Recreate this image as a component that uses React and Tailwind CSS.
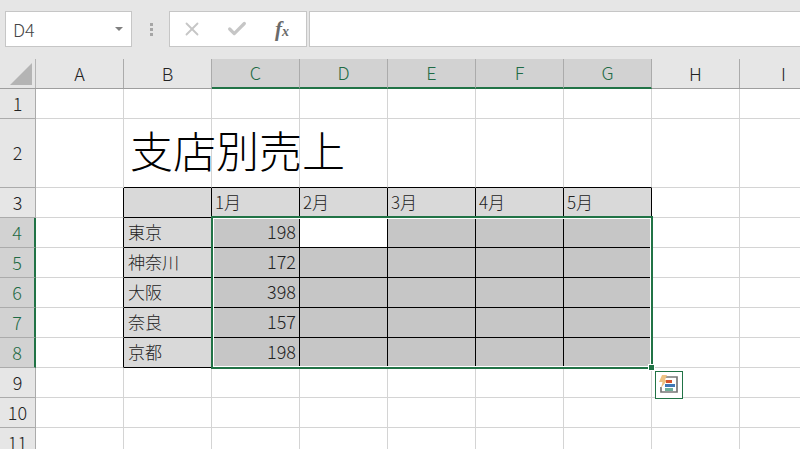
import React from "react";
import { X, Check } from "lucide-react";

const columns = ["A", "B", "C", "D", "E", "F", "G", "H", "I"];
const rowHeights = { 1: "h-[30px]", 2: "h-[69px]" };
const rows = [1, 2, 3, 4, 5, 6, 7, 8, 9, 10, 11];
const months = { C: "1月", D: "2月", E: "3月", F: "4月", G: "5月" };
const branches = { 4: "東京", 5: "神奈川", 6: "大阪", 7: "奈良", 8: "京都" };
const sales = { 4: 198, 5: 172, 6: 398, 7: 157, 8: 198 };

const inTable = (col, row) => "BCDEFG".includes(col) && row >= 3 && row <= 8;
const isSelected = (col, row) => "CDEFG".includes(col) && row >= 4 && row <= 8;

const Cell = ({ col, row }) => {
  // right and bottom edges are what draw the grid, so the table's top/left edges sit on neighbours
  const blackRight = inTable(col, row) || (col === "A" && row >= 3 && row <= 8);
  const blackBottom = inTable(col, row) || ("BCDEFG".includes(col) && row === 2);
  let fill = "bg-white";
  if (inTable(col, row)) fill = "bg-[#d9d9d9]";
  if (isSelected(col, row)) fill = "bg-[#c6c6c6]";
  if (col === "D" && row === 4) fill = "bg-white";

  let text = "";
  if (row === 3 && months[col]) text = months[col];
  if (col === "B" && branches[row]) text = branches[row];

  return (
    <div
      className={`w-[88px] shrink-0 border-r border-b flex items-center pb-[3px] text-[17px] leading-none text-[#222] ${fill} ${
        blackRight ? "border-r-black" : "border-r-[#d4d4d4]"
      } ${blackBottom ? "border-b-black" : "border-b-[#d4d4d4]"}`}
    >
      {text && <span className={col === "B" ? "pl-[4px]" : "pl-[3px]"}>{text}</span>}
      {col === "C" && sales[row] && (
        <span className="ml-auto pr-[3px] text-[18px]">{sales[row]}</span>
      )}
    </div>
  );
};

const QuickAnalysisIcon = () => (
  <svg width="28" height="28" viewBox="0 0 28 28">
    <rect x="0.5" y="0.5" width="27" height="27" fill="#fff" stroke="#217346" />
    <path d="M10 6H22V21H6V16" fill="none" stroke="#777" strokeWidth="1.7" />
    <path d="M7 4h5l-2 5h2.5L6 17l1.5-6H4z" fill="#edc283" />
    <rect x="11" y="9" width="6" height="3" fill="#d5532c" />
    <rect x="10" y="13" width="10" height="3" fill="#3f77b5" />
    <rect x="10" y="17" width="8" height="3" fill="#6fb09a" />
  </svg>
);

export default function App() {
  return (
    <div
      className="relative w-[800px] h-[449px] overflow-hidden bg-white"
      style={{ fontFamily: '"Noto Sans CJK JP", "Noto Sans", sans-serif', fontWeight: 300 }}
    >
      {/* FORMULA BAR */}
      <div className="h-[59px] bg-[#e6e6e6] flex items-start pt-[11px] pl-[5px]">
        <div className="w-[127px] h-[36px] bg-white border border-[#c6c6c6] flex items-center justify-between pl-[7px] pr-[8px]">
          <span className="text-[18px] leading-none text-[#444]">D4</span>
          <span className="w-0 h-0 border-x-[4px] border-x-transparent border-t-[4px] border-t-[#808080]" />
        </div>
        <div className="w-[37px] h-[36px] flex flex-col items-center justify-center gap-[2px] pl-[1px]">
          <span className="w-[3px] h-[3px] bg-[#a6a6a6]" />
          <span className="w-[3px] h-[3px] bg-[#a6a6a6]" />
          <span className="w-[3px] h-[3px] bg-[#a6a6a6]" />
        </div>
        <div className="w-[138px] h-[36px] bg-white border border-[#c6c6c6] flex items-center pl-[11px]">
          <X size={22} strokeWidth={2} className="text-[#c6c6c6]" />
          <Check size={22} strokeWidth={3.5} className="text-[#c6c6c6] ml-[23px]" />
          <span
            className="ml-[27px] text-[21px] leading-none font-bold italic text-[#6a6a6a]"
            style={{ fontFamily: '"Liberation Serif", serif' }}
          >
            f<span className="text-[14px]">x</span>
          </span>
        </div>
        <div className="ml-[2px] flex-1 h-[36px] bg-white border border-[#c6c6c6] border-r-0" />
      </div>

      {/* COLUMN HEADERS */}
      <div className="flex h-[30px] bg-[#e6e6e6] border-b border-b-[#9e9e9e]">
        <div className="relative w-[36px] shrink-0 border-r border-r-[#b4b4b4]">
          <svg width="35" height="29" className="block">
            <path d="M32 4V26H10Z" fill="#b4b4b4" />
          </svg>
        </div>
        {columns.map((col) => {
          const selected = "CDEFG".includes(col);
          return (
            <div
              key={col}
              className={`w-[88px] shrink-0 flex items-center justify-center pb-[2px] text-[18px] leading-none border-r ${
                selected
                  ? "bg-[#d2d2d2] text-[#1f6b45] border-r-[#ababab] border-b-2 border-b-[#217346] -mb-px"
                  : "text-[#222] border-r-[#ababab]"
              }`}
            >
              {col}
            </div>
          );
        })}
      </div>

      {/* SHEET ROWS */}
      {rows.map((row) => {
        const selected = row >= 4 && row <= 8;
        return (
          <div key={row} className={`flex ${rowHeights[row] === undefined ? "h-[30px]" : rowHeights[row]}`}>
            <div
              className={`w-[36px] shrink-0 flex items-center justify-center pb-[2px] text-[18px] leading-none border-b border-b-[#ababab] ${
                selected
                  ? "bg-[#d2d2d2] text-[#1f6b45] border-r-2 border-r-[#217346]"
                  : "bg-[#e6e6e6] text-[#222] border-r border-r-[#ababab]"
              }`}
            >
              {row}
            </div>
            {columns.map((col) => (
              <Cell key={col} col={col} row={row} />
            ))}
          </div>
        );
      })}

      {/* TITLE lies over row 2 */}
      <div className="absolute left-[130px] top-[115px] h-[68px] flex items-center text-[43px] leading-none text-black">
        支店別売上
      </div>

      {/* SELECTION */}
      <div className="absolute left-[211px] top-[216px] w-[442px] h-[153px] border-2 border-[#217346] pointer-events-none">
        <div className="w-full h-full border border-white" />
      </div>
      <div className="absolute left-[648px] top-[364px] w-[7px] h-[7px] bg-[#217346] border border-white" />
      <div className="absolute left-[655px] top-[371px]">
        <QuickAnalysisIcon />
      </div>
    </div>
  );
}
